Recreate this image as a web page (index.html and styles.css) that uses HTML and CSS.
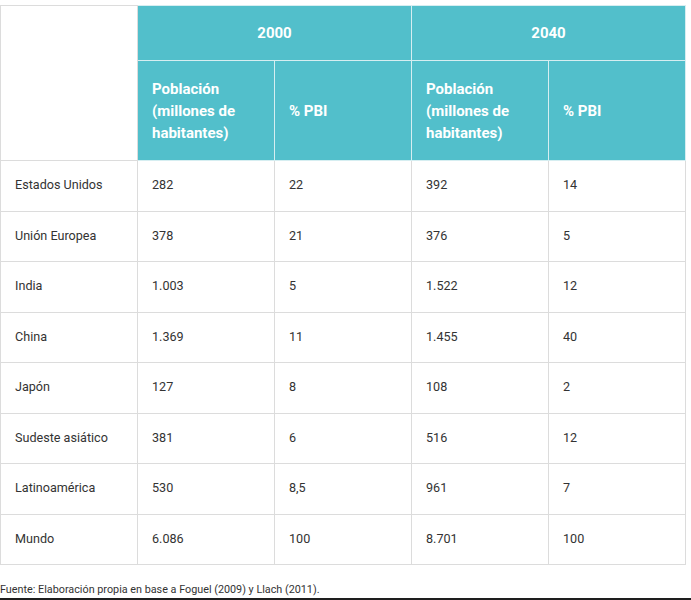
FILE: index.html
```html
<!DOCTYPE html>
<html lang="es">
<head>
<meta charset="utf-8">
<title>Tabla</title>
<link rel="stylesheet" href="styles.css">
</head>
<body>
<div class="page">
  <table class="data">
    <colgroup>
      <col class="c"><col class="c"><col class="c"><col class="c"><col class="c">
    </colgroup>
    <thead>
      <tr class="h1">
        <th class="blank" rowspan="2"></th>
        <th class="year" colspan="2">2000</th>
        <th class="year" colspan="2">2040</th>
      </tr>
      <tr class="h2">
        <th class="sub">Población (millones de habitantes)</th>
        <th class="sub">% PBI</th>
        <th class="sub">Población (millones de habitantes)</th>
        <th class="sub">% PBI</th>
      </tr>
    </thead>
    <tbody>
      <tr><td>Estados Unidos</td><td>282</td><td>22</td><td>392</td><td>14</td></tr>
      <tr><td>Unión Europea</td><td>378</td><td>21</td><td>376</td><td>5</td></tr>
      <tr><td>India</td><td>1.003</td><td>5</td><td>1.522</td><td>12</td></tr>
      <tr><td>China</td><td>1.369</td><td>11</td><td>1.455</td><td>40</td></tr>
      <tr><td>Japón</td><td>127</td><td>8</td><td>108</td><td>2</td></tr>
      <tr><td>Sudeste asiático</td><td>381</td><td>6</td><td>516</td><td>12</td></tr>
      <tr><td>Latinoamérica</td><td>530</td><td>8,5</td><td>961</td><td>7</td></tr>
      <tr><td>Mundo</td><td>6.086</td><td>100</td><td>8.701</td><td>100</td></tr>
    </tbody>
  </table>
  <p class="source">Fuente: Elaboración propia en base a Foguel (2009) y Llach (2011).</p>
</div>
</body>
</html>
```

FILE: styles.css
```css
html, body {
  margin: 0;
  padding: 0;
  background: #ffffff;
}

.page {
  width: 691px;
  height: 600px;
  box-sizing: border-box;
  padding-top: 5px;
  border-bottom: 2px solid #1e1e1e;
  font-family: Roboto, "Liberation Sans", sans-serif;
  color: #333333;
}

.data {
  width: 686px;
  border-collapse: collapse;
  table-layout: fixed;
}

.data th,
.data td {
  border: 1px solid #dcdcdc;
  text-align: left;
  vertical-align: middle;
  padding: 0 14px;
}

.data thead th {
  background: #52bfcb;
  color: #ffffff;
  font-weight: 700;
  font-size: 15px;
  line-height: 22px;
  border-color: #d6eef1;
}

.data thead th.blank {
  background: #ffffff;
  border-color: #dcdcdc;
}

.data .h1 th {
  height: 54px;
}

.data .year {
  text-align: center;
}

.data .h2 th {
  height: 99px;
}

.data tbody td {
  height: 47.5px;
  padding-bottom: 2px;
  font-size: 12.6px;
  color: #333333;
}

.source {
  margin: 18px 0 0;
  font-size: 10.8px;
  color: #333333;
}
```
